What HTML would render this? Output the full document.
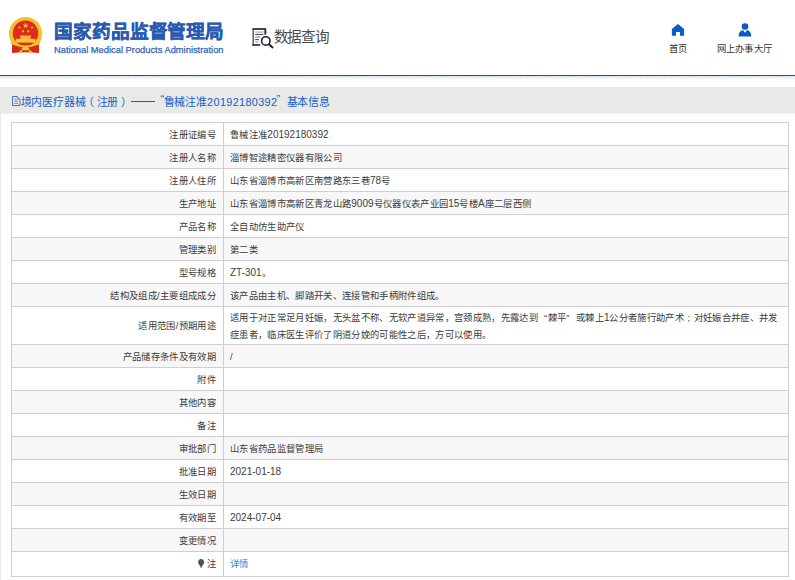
<!DOCTYPE html>
<html lang="zh-CN"><head><meta charset="utf-8">
<style>
*{margin:0;padding:0;box-sizing:border-box}
html,body{width:795px;height:580px;overflow:hidden;background:#fff;font-family:"Liberation Sans",sans-serif}
.a{position:absolute;white-space:nowrap}
.emblem{left:8px;top:16px;width:36px;height:39px}
.t1{left:54px;top:15.8px;font-size:18.67px;font-weight:bold;color:#285bb0;letter-spacing:-0.1px;-webkit-text-stroke:0.35px #285bb0}
.t2{left:54px;top:44.5px;font-size:9.33px;color:#3563b6;-webkit-text-stroke:0.25px #3563b6}
.sq{left:252px;top:27px;width:23px;height:23px}
.sqt{left:273.5px;top:25.3px;font-size:14.6px;letter-spacing:-1.1px;color:#4a4a52}
.nav{font-size:9.33px;letter-spacing:0.33px;color:#333}
.bl{left:0;top:75px;width:795px;height:1px;background:#0a5ac4}
.bl2{left:0;top:76px;width:795px;height:1px;background:#d5e2f4}
.hatch{left:0;top:77px;width:795px;height:2px;background:repeating-linear-gradient(135deg,#fff 0 1px,#d8d8d8 1px 1.7px,#fff 1.7px 2.33px)}
.band{left:0;top:87px;width:795px;height:493px;background:#e9e9e8}
.crumb{left:21px;top:92.5px;font-size:10.9px;color:#1260c8;letter-spacing:-0.1px}
.panel{left:1px;top:113px;width:794px;height:467px;background:#fff;border-top:1px solid #f0f2f8}
table{position:absolute;left:11px;top:122px;width:778px;border-collapse:collapse;font-size:9.33px;letter-spacing:0.33px;color:#3c3c3c;table-layout:fixed}
td{border:1px solid #cfcdd0;height:23px;padding:2px 7px 0 6px;line-height:16.5px;vertical-align:middle}
td.k{width:212px;text-align:right;padding:2px 7px 0 0}
tr:nth-child(even) td{background:#f7f7f7}
.q{display:inline-block;width:9.66px}
.n{font-size:10px;letter-spacing:0}
a{color:#2a86e8;text-decoration:none}
</style></head><body>
<svg class="a" style="left:0;top:0" width="50" height="60" viewBox="0 0 50 60">
  <circle cx="25.6" cy="33.6" r="16.6" fill="#efc22e"/>
  <circle cx="25.5" cy="33.3" r="12.7" fill="#e02b1c"/>
  <path d="M25.6 22.6 l0.75 2.1 2.25 0 -1.8 1.35 0.7 2.15 -1.9-1.35 -1.9 1.35 0.7-2.15 -1.8-1.35 2.25 0z" fill="#f6cf2a"/>
  <circle cx="19.4" cy="27.5" r="1.1" fill="#f6cf2a"/><circle cx="32" cy="27.5" r="1.1" fill="#f6cf2a"/>
  <circle cx="23" cy="31.3" r="1.1" fill="#f6cf2a"/><circle cx="28.2" cy="31.3" r="1.1" fill="#f6cf2a"/>
  <path d="M19.5 36.8 L31.5 36.8 L30.5 35.6 L20.5 35.6 Z" fill="#f6d040"/>
  <rect x="20.5" y="36.8" width="10" height="2" fill="#f3c93a"/>
  <rect x="15.9" y="38.8" width="19.4" height="3.8" fill="#f2c63a"/>
  <path d="M10.5 41 Q25.5 50 40.5 41 L40 44 Q25.5 52 11 44 Z" fill="#efc22e"/>
  <path d="M12 44.4 Q25.5 50 39 44.4 L39 53 Q25.5 51.5 12 53 Z" fill="#d9261e"/>
  <ellipse cx="25.5" cy="48.5" rx="3.6" ry="1.8" fill="#f3c93a"/>
  <path d="M21.5 49.5 Q19 52 17.5 53 L20 53 L23 50.3 Z M29.5 49.5 Q32 52 33.5 53 L31 53 L28 50.3 Z" fill="#f3c93a"/>
</svg>
<div class="a t1">国家药品监督管理局</div>
<div class="a t2">National Medical Products Administration</div>
<svg class="a" style="left:248px;top:22px" width="32" height="30" viewBox="0 0 32 30">
  <path d="M5.2 24 V6.9 H17.3 V12.4" fill="none" stroke="#5a5a68" stroke-width="1.5"/>
  <path d="M4.5 7 H18 M17.4 7 V12.4" fill="none" stroke="#2e2e3c" stroke-width="1.7"/>
  <path d="M4.5 23 H12.2" stroke="#2e2e3c" stroke-width="1.7"/>
  <path d="M7.2 10.1h8.3" stroke="#a0a0a8" stroke-width="1.1"/>
  <path d="M7.2 12.4h8.3" stroke="#3a3a48" stroke-width="1"/>
  <path d="M7.2 15h5.2" stroke="#7a7a86" stroke-width="1.1"/>
  <path d="M7.2 17.6h3.6" stroke="#3a3a48" stroke-width="1"/>
  <path d="M7.2 19.9h3.6" stroke="#a0a0a8" stroke-width="1.1"/>
  <circle cx="17.8" cy="18.9" r="4.2" fill="#fff" stroke="#262634" stroke-width="1.6"/>
  <path d="M20.8 21.9 L25 25.9" stroke="#262634" stroke-width="2.1"/>
</svg>
<div class="a sqt">数据查询</div>
<svg class="a" style="left:665px;top:18px" width="26" height="22" viewBox="0 0 26 22"><path d="M12.9 6 L19.1 10.9 L19.1 17.8 L15 17.8 L15 13.9 L11 13.9 L11 17.8 L6.9 17.8 L6.9 10.9 Z" fill="#0b5bc6"/></svg>
<div class="a nav" style="left:668.7px;top:40.5px">首页</div>
<svg class="a" style="left:730px;top:18px" width="30" height="22" viewBox="0 0 30 22"><circle cx="15" cy="8.5" r="3.3" fill="#0b5bc6"/><path d="M8.6 18.6 C8.6 14.6 10.4 12.6 13 12.1 L15 14.7 L17 12.1 C19.6 12.6 21.3 14.6 21.3 18.6 Z" fill="#0b5bc6"/></svg>
<div class="a nav" style="left:716.5px;top:41px">网上办事大厅</div>
<div class="a bl"></div>
<div class="a bl2"></div>
<svg class="a" style="left:0;top:0" width="795" height="85" viewBox="0 0 795 85"><path d="M0.00 79.2L2.20 76.8 M3.35 79.2L5.55 76.8 M6.70 79.2L8.90 76.8 M10.05 79.2L12.25 76.8 M13.40 79.2L15.60 76.8 M16.75 79.2L18.95 76.8 M20.10 79.2L22.30 76.8 M23.45 79.2L25.65 76.8 M26.80 79.2L29.00 76.8 M30.15 79.2L32.35 76.8 M33.50 79.2L35.70 76.8 M36.85 79.2L39.05 76.8 M40.20 79.2L42.40 76.8 M43.55 79.2L45.75 76.8 M46.90 79.2L49.10 76.8 M50.25 79.2L52.45 76.8 M53.60 79.2L55.80 76.8 M56.95 79.2L59.15 76.8 M60.30 79.2L62.50 76.8 M63.65 79.2L65.85 76.8 M67.00 79.2L69.20 76.8 M70.35 79.2L72.55 76.8 M73.70 79.2L75.90 76.8 M77.05 79.2L79.25 76.8 M80.40 79.2L82.60 76.8 M83.75 79.2L85.95 76.8 M87.10 79.2L89.30 76.8 M90.45 79.2L92.65 76.8 M93.80 79.2L96.00 76.8 M97.15 79.2L99.35 76.8 M100.50 79.2L102.70 76.8 M103.85 79.2L106.05 76.8 M107.20 79.2L109.40 76.8 M110.55 79.2L112.75 76.8 M113.90 79.2L116.10 76.8 M117.25 79.2L119.45 76.8 M120.60 79.2L122.80 76.8 M123.95 79.2L126.15 76.8 M127.30 79.2L129.50 76.8 M130.65 79.2L132.85 76.8 M134.00 79.2L136.20 76.8 M137.35 79.2L139.55 76.8 M140.70 79.2L142.90 76.8 M144.05 79.2L146.25 76.8 M147.40 79.2L149.60 76.8 M150.75 79.2L152.95 76.8 M154.10 79.2L156.30 76.8 M157.45 79.2L159.65 76.8 M160.80 79.2L163.00 76.8 M164.15 79.2L166.35 76.8 M167.50 79.2L169.70 76.8 M170.85 79.2L173.05 76.8 M174.20 79.2L176.40 76.8 M177.55 79.2L179.75 76.8 M180.90 79.2L183.10 76.8 M184.25 79.2L186.45 76.8 M187.60 79.2L189.80 76.8 M190.95 79.2L193.15 76.8 M194.30 79.2L196.50 76.8 M197.65 79.2L199.85 76.8 M201.00 79.2L203.20 76.8 M204.35 79.2L206.55 76.8 M207.70 79.2L209.90 76.8 M211.05 79.2L213.25 76.8 M214.40 79.2L216.60 76.8 M217.75 79.2L219.95 76.8 M221.10 79.2L223.30 76.8 M224.45 79.2L226.65 76.8 M227.80 79.2L230.00 76.8 M231.15 79.2L233.35 76.8 M234.50 79.2L236.70 76.8 M237.85 79.2L240.05 76.8 M241.20 79.2L243.40 76.8 M244.55 79.2L246.75 76.8 M247.90 79.2L250.10 76.8 M251.25 79.2L253.45 76.8 M254.60 79.2L256.80 76.8 M257.95 79.2L260.15 76.8 M261.30 79.2L263.50 76.8 M264.65 79.2L266.85 76.8 M268.00 79.2L270.20 76.8 M271.35 79.2L273.55 76.8 M274.70 79.2L276.90 76.8 M278.05 79.2L280.25 76.8 M281.40 79.2L283.60 76.8 M284.75 79.2L286.95 76.8 M288.10 79.2L290.30 76.8 M291.45 79.2L293.65 76.8 M294.80 79.2L297.00 76.8 M298.15 79.2L300.35 76.8 M301.50 79.2L303.70 76.8 M304.85 79.2L307.05 76.8 M308.20 79.2L310.40 76.8 M311.55 79.2L313.75 76.8 M314.90 79.2L317.10 76.8 M318.25 79.2L320.45 76.8 M321.60 79.2L323.80 76.8 M324.95 79.2L327.15 76.8 M328.30 79.2L330.50 76.8 M331.65 79.2L333.85 76.8 M335.00 79.2L337.20 76.8 M338.35 79.2L340.55 76.8 M341.70 79.2L343.90 76.8 M345.05 79.2L347.25 76.8 M348.40 79.2L350.60 76.8 M351.75 79.2L353.95 76.8 M355.10 79.2L357.30 76.8 M358.45 79.2L360.65 76.8 M361.80 79.2L364.00 76.8 M365.15 79.2L367.35 76.8 M368.50 79.2L370.70 76.8 M371.85 79.2L374.05 76.8 M375.20 79.2L377.40 76.8 M378.55 79.2L380.75 76.8 M381.90 79.2L384.10 76.8 M385.25 79.2L387.45 76.8 M388.60 79.2L390.80 76.8 M391.95 79.2L394.15 76.8 M395.30 79.2L397.50 76.8 M398.65 79.2L400.85 76.8 M402.00 79.2L404.20 76.8 M405.35 79.2L407.55 76.8 M408.70 79.2L410.90 76.8 M412.05 79.2L414.25 76.8 M415.40 79.2L417.60 76.8 M418.75 79.2L420.95 76.8 M422.10 79.2L424.30 76.8 M425.45 79.2L427.65 76.8 M428.80 79.2L431.00 76.8 M432.15 79.2L434.35 76.8 M435.50 79.2L437.70 76.8 M438.85 79.2L441.05 76.8 M442.20 79.2L444.40 76.8 M445.55 79.2L447.75 76.8 M448.90 79.2L451.10 76.8 M452.25 79.2L454.45 76.8 M455.60 79.2L457.80 76.8 M458.95 79.2L461.15 76.8 M462.30 79.2L464.50 76.8 M465.65 79.2L467.85 76.8 M469.00 79.2L471.20 76.8 M472.35 79.2L474.55 76.8 M475.70 79.2L477.90 76.8 M479.05 79.2L481.25 76.8 M482.40 79.2L484.60 76.8 M485.75 79.2L487.95 76.8 M489.10 79.2L491.30 76.8 M492.45 79.2L494.65 76.8 M495.80 79.2L498.00 76.8 M499.15 79.2L501.35 76.8 M502.50 79.2L504.70 76.8 M505.85 79.2L508.05 76.8 M509.20 79.2L511.40 76.8 M512.55 79.2L514.75 76.8 M515.90 79.2L518.10 76.8 M519.25 79.2L521.45 76.8 M522.60 79.2L524.80 76.8 M525.95 79.2L528.15 76.8 M529.30 79.2L531.50 76.8 M532.65 79.2L534.85 76.8 M536.00 79.2L538.20 76.8 M539.35 79.2L541.55 76.8 M542.70 79.2L544.90 76.8 M546.05 79.2L548.25 76.8 M549.40 79.2L551.60 76.8 M552.75 79.2L554.95 76.8 M556.10 79.2L558.30 76.8 M559.45 79.2L561.65 76.8 M562.80 79.2L565.00 76.8 M566.15 79.2L568.35 76.8 M569.50 79.2L571.70 76.8 M572.85 79.2L575.05 76.8 M576.20 79.2L578.40 76.8 M579.55 79.2L581.75 76.8 M582.90 79.2L585.10 76.8 M586.25 79.2L588.45 76.8 M589.60 79.2L591.80 76.8 M592.95 79.2L595.15 76.8 M596.30 79.2L598.50 76.8 M599.65 79.2L601.85 76.8 M603.00 79.2L605.20 76.8 M606.35 79.2L608.55 76.8 M609.70 79.2L611.90 76.8 M613.05 79.2L615.25 76.8 M616.40 79.2L618.60 76.8 M619.75 79.2L621.95 76.8 M623.10 79.2L625.30 76.8 M626.45 79.2L628.65 76.8 M629.80 79.2L632.00 76.8 M633.15 79.2L635.35 76.8 M636.50 79.2L638.70 76.8 M639.85 79.2L642.05 76.8 M643.20 79.2L645.40 76.8 M646.55 79.2L648.75 76.8 M649.90 79.2L652.10 76.8 M653.25 79.2L655.45 76.8 M656.60 79.2L658.80 76.8 M659.95 79.2L662.15 76.8 M663.30 79.2L665.50 76.8 M666.65 79.2L668.85 76.8 M670.00 79.2L672.20 76.8 M673.35 79.2L675.55 76.8 M676.70 79.2L678.90 76.8 M680.05 79.2L682.25 76.8 M683.40 79.2L685.60 76.8 M686.75 79.2L688.95 76.8 M690.10 79.2L692.30 76.8 M693.45 79.2L695.65 76.8 M696.80 79.2L699.00 76.8 M700.15 79.2L702.35 76.8 M703.50 79.2L705.70 76.8 M706.85 79.2L709.05 76.8 M710.20 79.2L712.40 76.8 M713.55 79.2L715.75 76.8 M716.90 79.2L719.10 76.8 M720.25 79.2L722.45 76.8 M723.60 79.2L725.80 76.8 M726.95 79.2L729.15 76.8 M730.30 79.2L732.50 76.8 M733.65 79.2L735.85 76.8 M737.00 79.2L739.20 76.8 M740.35 79.2L742.55 76.8 M743.70 79.2L745.90 76.8 M747.05 79.2L749.25 76.8 M750.40 79.2L752.60 76.8 M753.75 79.2L755.95 76.8 M757.10 79.2L759.30 76.8 M760.45 79.2L762.65 76.8 M763.80 79.2L766.00 76.8 M767.15 79.2L769.35 76.8 M770.50 79.2L772.70 76.8 M773.85 79.2L776.05 76.8 M777.20 79.2L779.40 76.8 M780.55 79.2L782.75 76.8 M783.90 79.2L786.10 76.8 M787.25 79.2L789.45 76.8 M790.60 79.2L792.80 76.8 M793.95 79.2L796.15 76.8 M797.30 79.2L799.50 76.8 M800.65 79.2L802.85 76.8" stroke="#d6d6d6" stroke-width="0.9" fill="none"/></svg>
<div class="a band"></div>
<svg class="a" style="left:6px;top:90px" width="24" height="20" viewBox="0 0 24 20"><path d="M6.5 6.5 H11.2 L14 9.3 V15.5 H6.5 Z" fill="none" stroke="#3d68c8" stroke-width="0.95"/><path d="M11.1 6.8 V9.5 H13.8" fill="none" stroke="#6a8ad4" stroke-width="0.8"/><path d="M8.2 9.3h2.2M8.2 11.4h3.8M8.2 13.4h3.8" stroke="#6878c8" stroke-width="0.85"/></svg>
<div class="a crumb" style="left:20.5px">境内医疗器械</div>
<div class="a crumb" style="left:83px">（</div>
<div class="a crumb" style="left:96.5px">注册</div>
<div class="a crumb" style="left:120.5px">）</div>
<div class="a" style="left:131px;top:101px;width:23.5px;height:1px;background:#1260c8"></div>
<div class="a crumb" style="left:160.5px">“</div>
<div class="a crumb" style="left:163.5px">鲁械注准<span style="letter-spacing:0.33px">20192180392</span></div>
<div class="a crumb" style="left:276.5px">”</div>
<div class="a crumb" style="left:286.5px">基本信息</div>
<div class="a panel"></div>
<table>
<tr><td class="k">注册证编号</td><td>鲁械注准<span class="n">20192180392</span></td></tr>
<tr><td class="k">注册人名称</td><td>淄博智途精密仪器有限公司</td></tr>
<tr><td class="k">注册人住所</td><td>山东省淄博市高新区南营路东三巷<span class="n">78</span>号</td></tr>
<tr><td class="k">生产地址</td><td>山东省淄博市高新区青龙山路<span class="n">9009</span>号仪器仪表产业园<span class="n">15</span>号楼<span class="n">A</span>座二层西侧</td></tr>
<tr><td class="k">产品名称</td><td>全自动仿生助产仪</td></tr>
<tr><td class="k">管理类别</td><td>第二类</td></tr>
<tr><td class="k">型号规格</td><td><span class="n">ZT-301</span>。</td></tr>
<tr><td class="k">结构及组成/主要组成成分</td><td>该产品由主机、脚踏开关、连接管和手柄附件组成。</td></tr>
<tr><td class="k" style="height:38px;padding-top:2px">适用范围/预期用途</td><td style="line-height:16.5px;padding-top:2px">适用于对正常足月妊娠，无头盆不称、无软产道异常，宫颈成熟，先露达到<span class="q" style="text-align:right">“</span>棘平<span class="q">”</span>或棘上<span class="n">1</span>公分者施行助产术<span class="q" style="text-align:center;letter-spacing:0">;</span>对妊娠合并症、并发症患者，临床医生评价了阴道分娩的可能性之后，方可以使用。</td></tr>
<tr><td class="k">产品储存条件及有效期</td><td>/</td></tr>
<tr><td class="k">附件</td><td></td></tr>
<tr><td class="k">其他内容</td><td></td></tr>
<tr><td class="k">备注</td><td></td></tr>
<tr><td class="k">审批部门</td><td>山东省药品监督管理局</td></tr>
<tr><td class="k">批准日期</td><td><span class="n">2021-01-18</span></td></tr>
<tr><td class="k">生效日期</td><td></td></tr>
<tr><td class="k">有效期至</td><td><span class="n">2024-07-04</span></td></tr>
<tr><td class="k">变更情况</td><td></td></tr>
<tr><td class="k" style="height:25px;padding-top:1px"><svg width="7" height="9" viewBox="0 0 7 9" style="vertical-align:-0.5px;margin-right:2px"><path d="M3.1 0.1 C5 0.1 6.1 1.5 6.1 3.3 C6.1 5 4.6 6.2 3.8 7.4 L3.6 8.8 H2.6 L2.4 7.4 C1.6 6.2 0.1 5 0.1 3.3 C0.1 1.5 1.2 0.1 3.1 0.1 Z" fill="#505058"/></svg>注</td><td style="padding-top:1px"><a>详情</a></td></tr>
</table>
</body></html>
